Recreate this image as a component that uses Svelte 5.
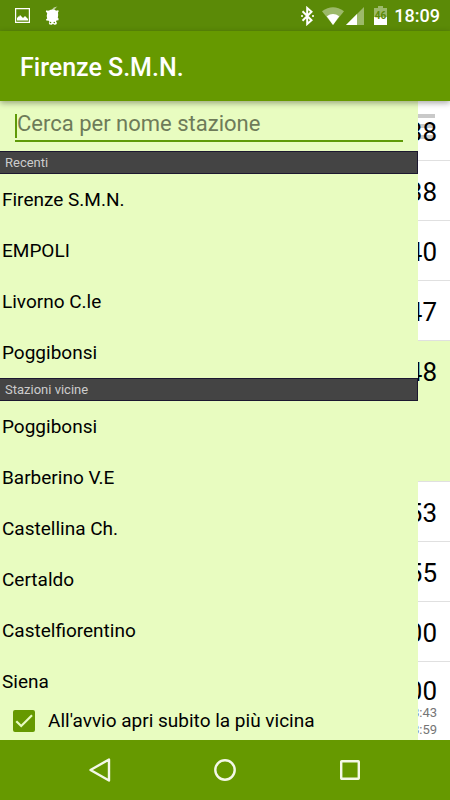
<script>
  const recent = ['Firenze S.M.N.', 'EMPOLI', 'Livorno C.le', 'Poggibonsi'];
  const nearby = ['Poggibonsi', 'Barberino V.E', 'Castellina Ch.', 'Certaldo', 'Castelfiorentino', 'Siena'];
  const departures = [
    { time: '18:38' },
    { time: '18:38' },
    { time: '18:40' },
    { time: '18:47' },
    { time: '18:48', open: true },
    { time: '18:53' },
    { time: '18:55' },
    { time: '19:00' },
    { time: '19:00', details: ['18:43', '18:59'] }
  ];
  let query = $state('');
  let openNearest = $state(true);
</script>

<div class="screen">
  <div class="status">
    <div class="group left">
      <svg width="16" height="16" viewBox="0 0 16 16">
        <path d="M.6.600h13.800v13.800H.6z" fill="none" stroke="#fff" stroke-width="1.200" />
        <path d="M2 12.500V9.500h1V8.500h1.500V7.500h1.500v1h1v1h2v-1h2v1h1v1h1v2z" fill="#fff" />
      </svg>
      <svg width="16" height="20" viewBox="0 0 16 20">
        <path d="M7 4C7.500 2 9.500.8 12.500.5 11 1.600 10 2.600 9.500 4z" fill="#fff" opacity=".6" />
        <path d="M4 4.500Q7.500 2.500 11 4.500l1.200.3.600-.8 1 1-.8 1.500Q13.500 9 12.800 12l1 .8-.6 1.700-1.400-.2-.8 1.200 1 1.500-.8 1.500-2 .2-1.200-1-1.200 1-2.300-.2-.7-1.500.6-1.500-1.200-1-1.600.3-.6-1.500L2.200 12.500Q1.300 9.500 2.200 7L.8 5.800l.6-1.500 1.500.4z" fill="#fff" />
        <circle cx="5.500" cy="16.500" r=".8" fill="#5b8a07" />
        <circle cx="9.300" cy="16.500" r=".8" fill="#5b8a07" />
      </svg>
    </div>
    <div class="group right">
      <svg width="13" height="20" viewBox="0 0 13 20">
        <path d="M1.500 5.300 10.500 14.200 6.200 18V2L10.500 5.800 1.500 14.700" fill="none" stroke="#fff" stroke-width="2" />
        <path d="M0 9h2v2H0zM11 9h2v2h-2z" fill="#fff" opacity=".8" />
      </svg>
      <svg class="wifi" width="22" height="18" viewBox="0 0 22 18">
        <path d="M0 4.200Q11-3.600 22 4.200L11 18z" fill="#fff" opacity=".4" />
        <path d="M4.800 9.200q6.200-4.600 12.400 0L11 18z" fill="#fff" />
      </svg>
      <svg class="cell" width="18" height="18" viewBox="0 0 18 18">
        <path d="M18 0v18H0z" fill="#fff" opacity=".4" />
        <path d="M11 7v11H0z" fill="#fff" />
      </svg>
      <svg class="battery" width="13" height="19" viewBox="0 0 13 19">
        <path d="M0 2h4V0h5v2h4v9H0z" fill="#fff" opacity=".4" />
        <path d="M0 11h13v8H0z" fill="#fff" />
        <text x="6.500" y="13" text-anchor="middle" font-size="10" font-weight="700" fill="#5b8a07">46</text>
      </svg>
      <span class="clock">18:09</span>
    </div>
  </div>

  <header><h1>Firenze S.M.N.</h1></header>

  <main>
    <svg class="handle" width="26" height="25" viewBox="0 0 26 25">
      <path d="M0 0h26v4H0zM0 10h26v4H0zM0 21h26v4H0z" fill="#c9c9c9" />
    </svg>
    <ul class="departures">
      {#each departures as train}
        <li class:open={train.open}>
          <span class="time">{train.time}</span>
          {#each train.details ?? [] as detail}
            <span class="detail">{detail}</span>
          {/each}
        </li>
      {/each}
    </ul>

    <aside>
      <div class="search">
        <input type="text" aria-label="Cerca per nome stazione" placeholder="Cerca per nome stazione" bind:value={query} />
        <span class="caret"></span>
      </div>
      <h2>Recenti</h2>
      <ul class="stations">
        {#each recent as name}
          <li><button type="button">{name}</button></li>
        {/each}
      </ul>
      <h2>Stazioni vicine</h2>
      <ul class="stations">
        {#each nearby as name}
          <li><button type="button">{name}</button></li>
        {/each}
      </ul>
      <label>
        <span class="box">
          <input type="checkbox" bind:checked={openNearest} />
          {#if openNearest}
            <svg width="22" height="22" viewBox="0 0 22 22">
              <path d="M3.300 11.200 8.200 16 19 5.300" fill="none" stroke="#e8fcc0" stroke-width="2.200" />
            </svg>
          {/if}
        </span>
        All'avvio apri subito la più vicina
      </label>
    </aside>
  </main>

  <nav>
    <button type="button" aria-label="Indietro">
      <svg width="24" height="26" viewBox="0 0 24 26">
        <path d="M21 2.500v21L2.500 13z" fill="none" stroke="#f4f8e8" stroke-width="2.400" stroke-linejoin="round" />
      </svg>
    </button>
    <button type="button" aria-label="Home">
      <svg width="24" height="24" viewBox="0 0 24 24">
        <circle cx="12" cy="12" r="9.700" fill="none" stroke="#f4f8e8" stroke-width="2.400" />
      </svg>
    </button>
    <button type="button" aria-label="Recenti">
      <svg width="22" height="22" viewBox="0 0 22 22">
        <rect x="2.200" y="2.200" width="17.600" height="17.600" rx=".5" fill="none" stroke="#f4f8e8" stroke-width="2.400" />
      </svg>
    </button>
  </nav>
</div>

<style>
  :global(body) {
    margin: 0;
  }
  .screen {
    display: flex;
    flex-direction: column;
    min-height: 100vh;
    font-family: Roboto, 'Liberation Sans', sans-serif;
    color: #000;
    background: #fff;
  }
  svg {
    display: block;
  }
  ul {
    list-style: none;
    margin: 0;
    padding: 0;
  }
  button {
    font: inherit;
    color: inherit;
    background: none;
    border: 0;
    padding: 0;
  }
  .status {
    display: flex;
    justify-content: space-between;
    align-items: center;
    height: 31px;
    padding: 0 10px 0 15px;
    background: #5b8a07;
    color: #fff;
  }
  .group {
    display: flex;
    align-items: center;
  }
  .left {
    gap: 14px;
  }
  .wifi {
    margin-left: 8px;
  }
  .cell {
    margin-left: 2px;
  }
  .battery {
    margin-left: 10px;
  }
  .clock {
    margin-left: 7px;
    font-size: 18px;
    font-weight: 500;
    line-height: 32px;
  }
  header {
    position: relative;
    z-index: 2;
    display: flex;
    align-items: center;
    height: 70px;
    padding: 2px 20px 0;
    box-sizing: border-box;
    background: #690;
    color: #fff;
    box-shadow: 0 2px 6px rgba(0, 0, 0, 0.35);
  }
  h1 {
    margin: 0;
    font-size: 25px;
    font-weight: 500;
  }
  main {
    position: relative;
    flex: 1;
    overflow: hidden;
  }
  .handle {
    position: absolute;
    top: 13px;
    right: 15px;
  }
  .departures {
    position: relative;
  }
  .departures li {
    display: flex;
    flex-direction: column;
    height: 60px;
    padding: 18px 13px 0 0;
    box-sizing: border-box;
    border-bottom: 1px solid #e0e0e0;
    text-align: right;
  }
  .departures li.open {
    height: 141px;
    background: #e8fcc0;
  }
  .departures li:last-child {
    height: auto;
    padding-top: 16px;
    border-bottom: 0;
  }
  .time {
    font-size: 26px;
    line-height: 26px;
  }
  .detail {
    font-size: 13px;
    line-height: 17px;
    color: #757575;
  }
  aside {
    position: absolute;
    inset: 0 32px 0 0;
    display: flex;
    flex-direction: column;
    background: #e8fcc0;
  }
  .search {
    position: relative;
    height: 50px;
    padding: 5px 15px 9px;
    box-sizing: border-box;
  }
  .search input {
    display: block;
    width: 100%;
    height: 36px;
    padding: 0 0 0 2px;
    box-sizing: border-box;
    border: 0;
    border-bottom: 2px solid #5f9a08;
    background: none;
    outline: none;
    font: 22px Roboto, 'Liberation Sans', sans-serif;
    color: #000;
  }
  .search input::placeholder {
    color: #6e7b59;
    opacity: 1;
  }
  .caret {
    position: absolute;
    left: 15px;
    top: 13px;
    width: 2px;
    height: 24px;
    background: #5f9a08;
  }
  h2 {
    margin: 0;
    height: 23px;
    padding-left: 5px;
    box-sizing: border-box;
    border: 1px solid #1c1830;
    border-left: 0;
    background: #444;
    color: #ccc;
    font-size: 13px;
    font-weight: 400;
    line-height: 21px;
  }
  .stations button {
    display: block;
    width: 100%;
    height: 51px;
    padding-left: 2px;
    text-align: left;
    font-size: 19px;
  }
  label {
    display: flex;
    align-items: center;
    gap: 13px;
    padding: 2px 0 0 13px;
    font-size: 19px;
    line-height: 24px;
  }
  .box {
    position: relative;
    width: 22px;
    height: 22px;
  }
  .box input {
    appearance: none;
    display: block;
    width: 22px;
    height: 22px;
    margin: 0;
    border: 2px solid #690;
    border-radius: 2px;
  }
  .box input:checked {
    background: #690;
  }
  .box svg {
    position: absolute;
    inset: 0;
    pointer-events: none;
  }
  nav {
    display: flex;
    justify-content: center;
    height: 60px;
    background: #690;
  }
  nav button {
    display: flex;
    align-items: center;
    justify-content: center;
    width: 125px;
  }
</style>
